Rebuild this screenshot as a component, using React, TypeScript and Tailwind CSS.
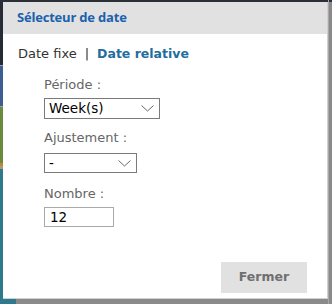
import React from "react";

const Chevron = () => (
  <svg width="13" height="7" viewBox="0 0 13 7" className="shrink-0">
    <polyline points="0.5,0.5 6.5,6 12.5,0.5" fill="none" stroke="#666" strokeWidth="1" />
  </svg>
);

export default function App() {
  const dv = { fontFamily: '"DejaVu Sans", Verdana, sans-serif' };
  return (
    <div className="relative w-[332px] h-[304px] overflow-hidden bg-[#8a8a8a]" style={dv}>
      {/* background behind the dialog */}
      <div className="absolute left-0 top-0 w-[3px] h-full flex flex-col">
        <div className="h-[65px] bg-[#262b36]" />
        <div className="h-[1px] bg-[#9aa0a8]" />
        <div className="h-[40px] bg-[#3c5e93]" />
        <div className="h-[1px] bg-[#9aa0a8]" />
        <div className="h-[56px] bg-[#6b8a3a]" />
        <div className="h-[3px] bg-[#c8803a]" />
        <div className="h-[3px] bg-[#a0a070]" />
        <div className="flex-1 bg-[#2e7a8c]" />
      </div>
      <div className="absolute left-0 top-0 w-full h-[2px] bg-[#2a2f38]" />
      <div className="absolute left-0 bottom-0 w-[16px] h-[5px] bg-[#2e7a8c]" />
      <div className="absolute right-[3px] top-0 w-[1px] h-full bg-[#a8a8a8]" />

      {/* dialog */}
      <div className="absolute left-[3px] top-[2px] w-[325px] h-[297px] bg-white flex flex-col border-b border-r border-[#d0d0d0]">
        <div className="h-[32px] bg-[#e1e1e1] flex items-center pl-[14px]">
          <span
            className="text-[13px] font-bold text-[#1a62ad] tracking-[-0.2px]"
            style={{ fontFamily: '"Open Sans", sans-serif' }}
          >
            Sélecteur de date
          </span>
        </div>
        <div className="flex flex-col pl-[15px] pt-[11px]">
          <div className="flex items-center h-[18px] text-[13px] text-[#333]">
            <span>Date fixe</span>
            <span className="mx-[8px]">|</span>
            <span className="font-bold text-[#1f6e9e] text-[12.5px]">Date relative</span>
          </div>
          <div className="flex flex-col pl-[26px]">
            <div className="mt-[13px] h-[18px] leading-[18px] text-[13px] text-[#666]">Période :</div>
            <div className="mt-[4px] w-[116px] h-[21px] border border-[#7a7a7a] flex items-center justify-between pl-[4px] pr-[5px] text-[13.5px] text-black">
              <span>Week(s)</span>
              <Chevron />
            </div>
            <div className="mt-[10px] h-[18px] leading-[18px] text-[13px] text-[#666]">Ajustement :</div>
            <div className="mt-[6px] w-[93px] h-[20px] border border-[#7a7a7a] flex items-center justify-between pl-[4px] pr-[5px] text-[13.5px] text-black">
              <span>-</span>
              <Chevron />
            </div>
            <div className="mt-[12px] h-[18px] leading-[18px] text-[13px] text-[#666]">Nombre :</div>
            <div className="mt-[4px] w-[70px] h-[20px] border border-[#a9a9a9] flex items-center pl-[5px] text-[13.5px] text-black">
              12
            </div>
          </div>
        </div>
        <div className="flex-1" />
        <div className="flex justify-end pr-[20px] pb-[5px]">
          <div className="w-[86px] h-[31px] bg-[#e1e1e1] flex items-center justify-center text-[12.5px] font-bold text-[#6f6f6f]">
            Fermer
          </div>
        </div>
      </div>
    </div>
  );
}
